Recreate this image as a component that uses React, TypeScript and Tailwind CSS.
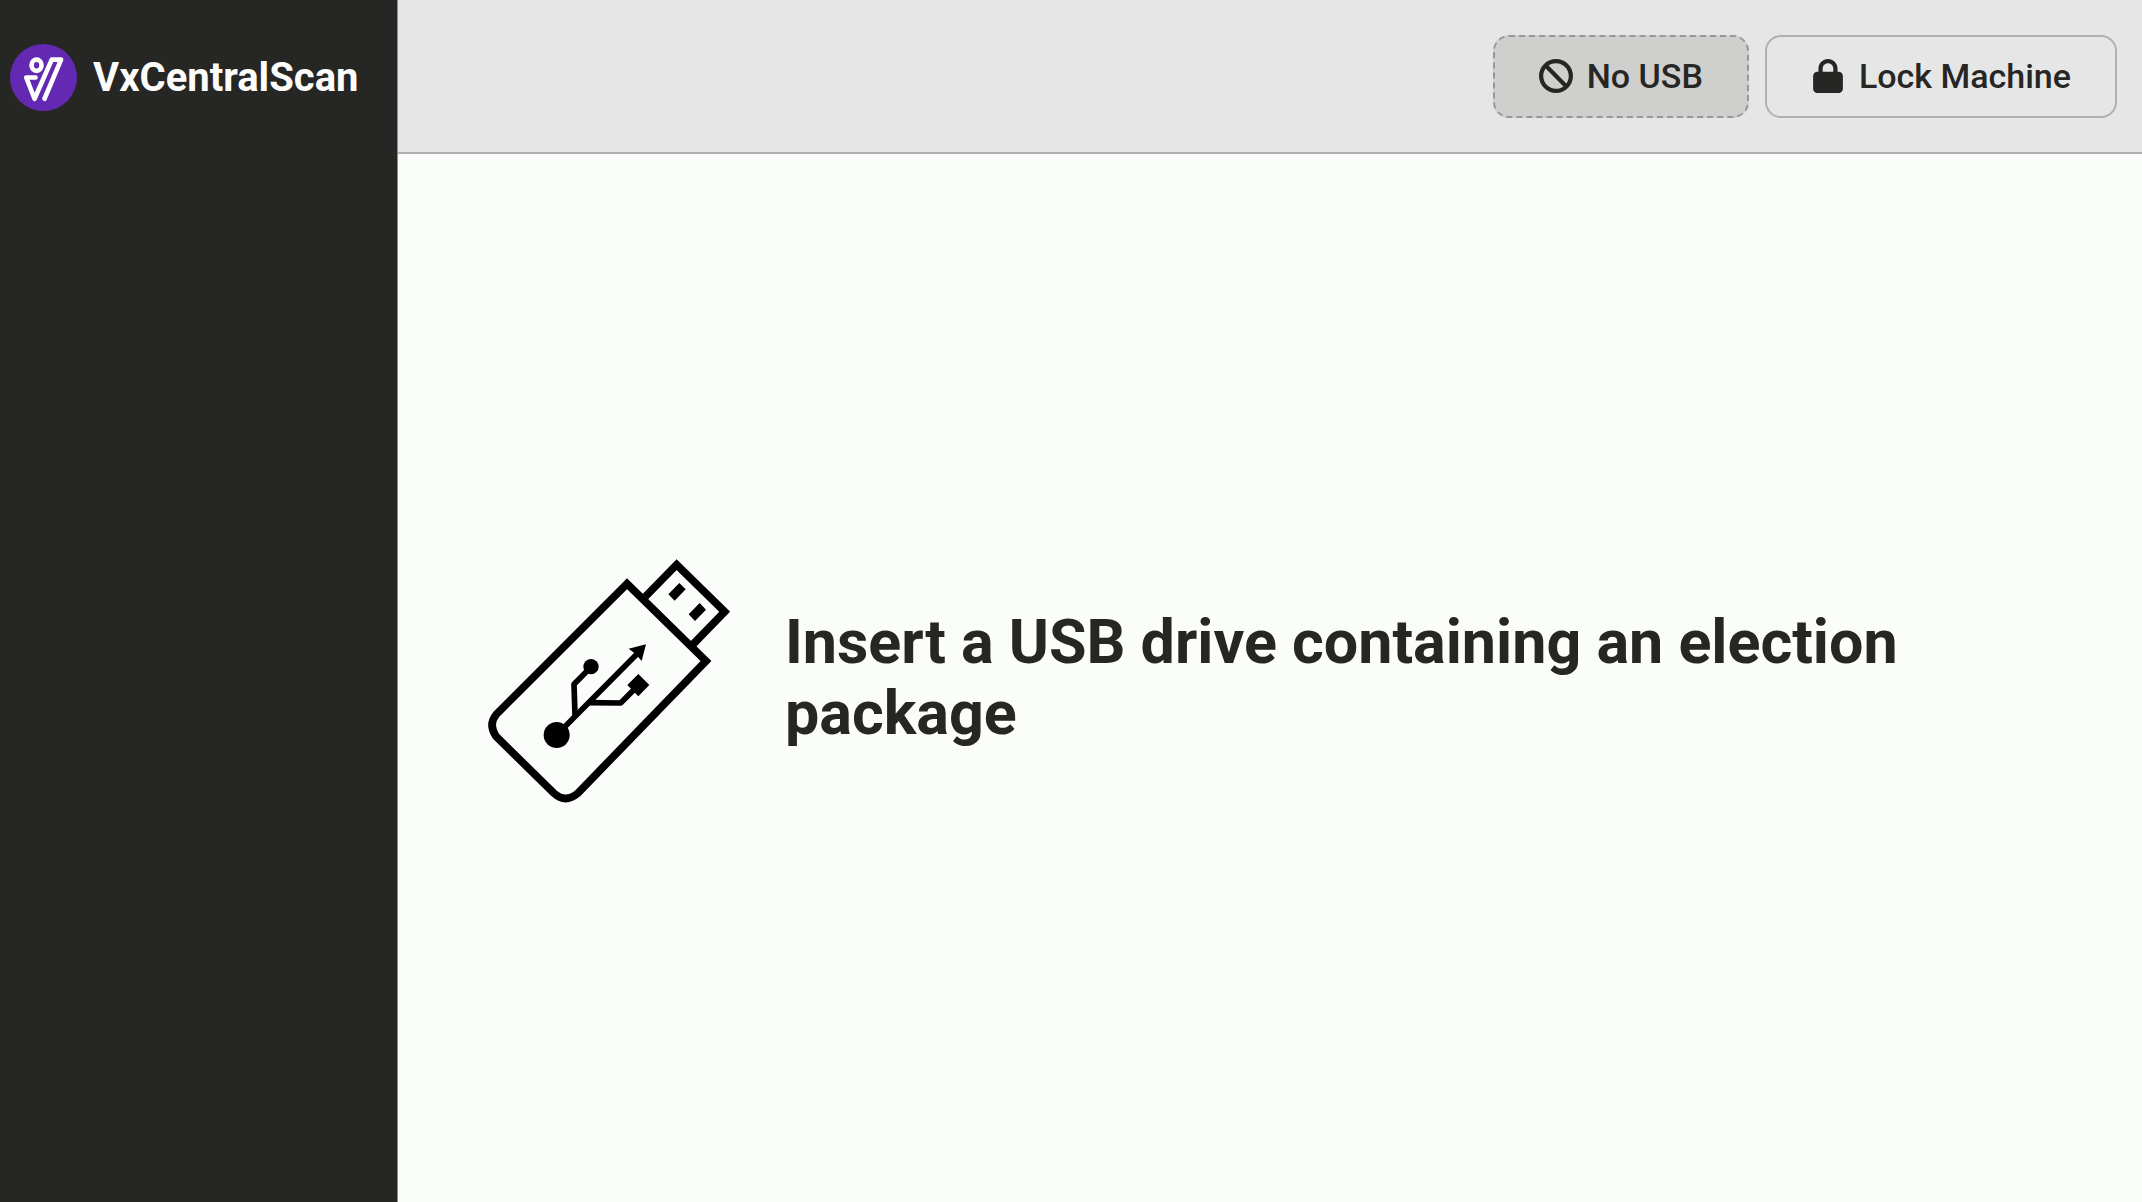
import { FaBan, FaLock } from 'react-icons/fa6';

function Logo() {
  return (
    <svg viewBox="30 38 202 202" className="size-[67px] shrink-0" aria-hidden="true">
      <circle cx="131" cy="139" r="101" fill="#6429b3" />
      <g fill="none" stroke="#fff" strokeWidth="14" strokeLinecap="round" strokeLinejoin="round">
        <ellipse cx="110" cy="102" rx="15" ry="17" />
        <path d="M107 139H79L104 203L156 85H184L134 203" />
      </g>
    </svg>
  );
}

function UsbDrive() {
  return (
    <svg viewBox="54 38 726 750" className="w-[242px] shrink-0" role="img" aria-label="USB drive">
      <g fill="none" stroke="#000" strokeWidth="23">
        <path d="M471 130L79 522Q54 552 78 588L251 758Q286 790 323 759L708 362Z" />
        <path d="M526 169L620 73L764 214L670 311" />
      </g>
      <path d="M628 128L647 147L614 181L595 162ZM689 188L708 208L675 242L656 222Z" />
      <g fill="none" stroke="#000" strokeWidth="17" strokeLinejoin="round">
        <path d="M260 584L500 342" />
        <path d="M315 525L312 432L363 380" />
        <path d="M354 487L452 488L505 435" />
      </g>
      <circle cx="260" cy="584" r="39" />
      <circle cx="363" cy="379" r="23" />
      <path d="M528 312L476 325L496 340L515 362ZM505 401L538 434L505 468L472 434Z" />
    </svg>
  );
}

export default function App() {
  return (
    <div className="flex min-h-screen bg-[#fafdf9] font-[Roboto,sans-serif] text-[#262624]">
      <aside className="w-[398px] shrink-0 border-r border-[#8b8b89] bg-[#262624]">
        <div className="flex h-[154px] items-center gap-4 pl-[10px]">
          <Logo />
          <span className="text-[40px] leading-[49px] font-bold text-[#fcfdfa]">VxCentralScan</span>
        </div>
      </aside>
      <div className="flex min-w-0 flex-1 flex-col">
        <header className="flex h-[154px] items-center justify-end gap-4 border-b-2 border-[#afb0af] bg-[#e6e6e6] pr-[25px]">
          <button
            type="button"
            disabled
            className="flex h-[83px] items-center gap-[14px] rounded-2xl border-2 border-dashed border-[#979795] bg-[#cfcfcd] px-11 text-[34px] font-medium"
          >
            <FaBan aria-hidden="true" />
            No USB
          </button>
          <button
            type="button"
            className="flex h-[83px] items-center gap-[14px] rounded-2xl border-2 border-[#afb0af] px-11 text-[34px] font-medium"
          >
            <FaLock aria-hidden="true" />
            Lock Machine
          </button>
        </header>
        <main className="flex flex-1 items-center gap-[55px] px-[90px]">
          <UsbDrive />
          <h1 className="text-[61px] leading-[71px] font-bold">
            Insert a USB drive containing an election package
          </h1>
        </main>
      </div>
    </div>
  );
}
